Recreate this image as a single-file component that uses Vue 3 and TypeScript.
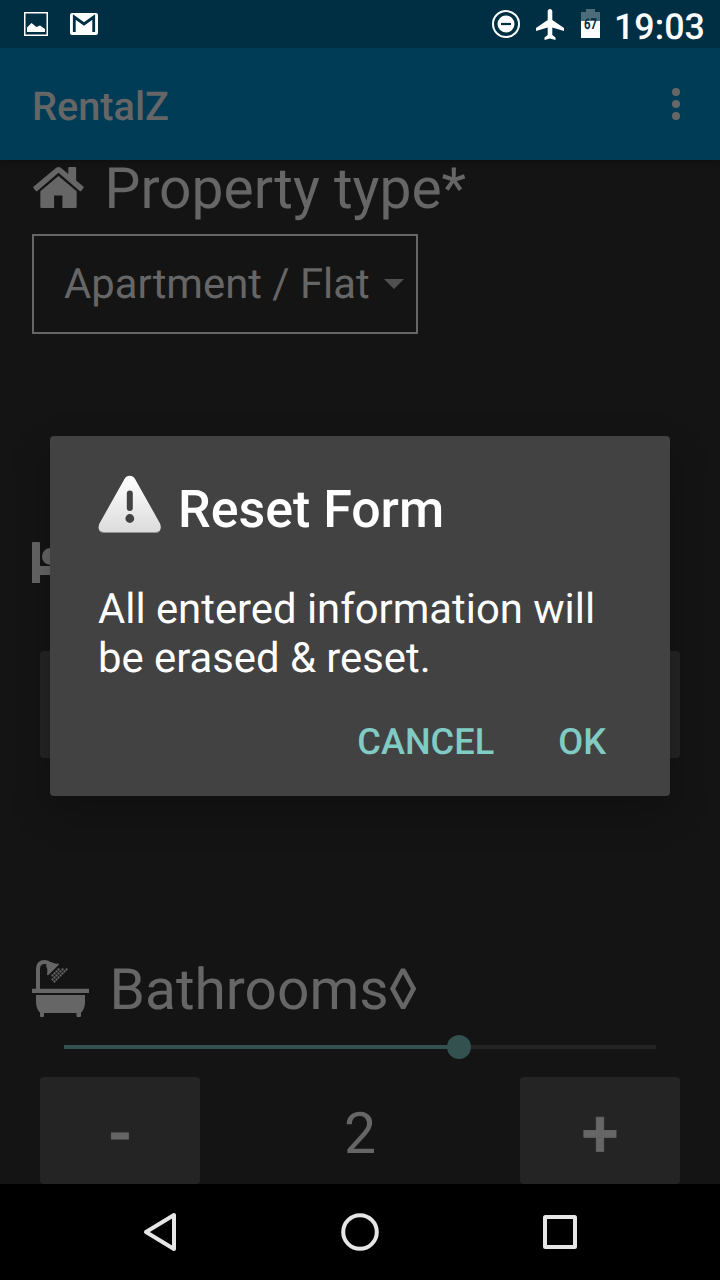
<script setup lang="ts">
import { ref } from 'vue'

const propertyType = ref<string>('Apartment / Flat')
const bathrooms = ref<number>(2)
const maxBathrooms = 3
const showers: number[][] = [
  [28, 11], [32, 11], [36, 11], [26, 13], [30, 13], [34, 13],
  [24, 15], [28, 15], [32, 15], [22, 17], [26, 17], [30, 17],
  [24, 19], [28, 19], [22, 21], [26, 21], [24, 23]
].map(([x, y]) => [x - 1.5, y - 1.5])
</script>

<template>
  <div class="screen">
    <header class="status">
      <svg class="s-picture" width="24" height="24" viewBox="0 0 24 24">
        <rect x=".75" y=".75" width="22.5" height="22.5" fill="none" stroke="#fff" stroke-width="1.5" />
        <path d="M3 20V15.500L7.500 11L12.500 15L16 13.500L21 17V20Z" fill="#fff" />
      </svg>
      <svg class="s-mail" width="28" height="24" viewBox="0 0 28 24">
        <rect y="1" width="28" height="22" rx="2" fill="#fff" />
        <path d="M4.300 20V5L14 12L23.700 5V20" fill="none" stroke="#002f43" stroke-width="2.800" />
      </svg>
      <span class="grow"></span>
      <svg class="s-dnd" width="28" height="28" viewBox="0 0 28 28">
        <circle cx="14" cy="14" r="13" fill="none" stroke="#fff" stroke-width="2" />
        <circle cx="14" cy="14" r="8.500" fill="#fff" />
        <path d="M9 14H19" stroke="#002f43" stroke-width="2.200" />
      </svg>
      <svg class="s-plane" width="28" height="31" viewBox="0 0 28 31">
        <path d="M14 0c1.400 0 2.300 1.200 2.300 2.500V11L28 19v3l-11.700-3.600V26l3.200 2.400V31L14 29.400 8.500 31v-2.600l3.200-2.400v-7.600L0 22v-3l11.700-8V2.500C11.700 1.200 12.600 0 14 0z" fill="#fff" />
      </svg>
      <svg class="s-battery" width="19" height="29" viewBox="0 0 19 29">
        <path d="M5 0h9v3h5v9H0V3h5z" fill="#4c6c7a" />
        <path d="M0 12h19v17H0z" fill="#fff" />
        <text x="3" y="20" textLength="13" lengthAdjust="spacingAndGlyphs" class="level">67</text>
      </svg>
      <span class="time">19:03</span>
    </header>

    <div class="appbar">
      <h1>RentalZ</h1>
      <svg width="8" height="32" viewBox="0 0 8 32" fill="#666">
        <circle cx="4" cy="4" r="4" /><circle cx="4" cy="16" r="4" /><circle cx="4" cy="28" r="4" />
      </svg>
    </div>

    <main class="form">
      <div class="heading property">
        <svg width="51" height="41" viewBox="0 0 52 41" preserveAspectRatio="none" fill="#666">
          <path d="M26 9L44.500 24.200V40q0 1-1 1H30V28.500H21.500V41H8.500q-1 0-1-1V24.200z" />
          <path d="M26 0q1.300 0 2.300.8L36 7V1q0-1 1-1h6q1 0 1 1v12.500l7.300 6q.9.700.2 1.600l-2.200 2.600q-.8.900-1.700.2L26 5.800 4.400 23.900q-.9.700-1.700-.2L.5 21.100q-.7-.9.200-1.600L23.700.8Q24.700 0 26 0z" />
        </svg>
        <span>Property type*</span>
      </div>
      <div class="spinner">
        <span>{{ propertyType }}</span>
        <svg width="20" height="10" viewBox="0 0 20 10"><path d="M0 0H20L10 10Z" fill="#505050" /></svg>
      </div>

      <svg class="bed" width="64" height="41" viewBox="0 0 64 41" fill="#666">
        <path d="M1 0h6q1 0 1 1v23h55q1 0 1 1v16h-8v-8H8v8H0V1q0-1 1-1z" />
        <circle cx="18.500" cy="14.500" r="8.500" /><path d="M29 7h25q10 0 10 10v5H29z" />
      </svg>
      <div class="stepper upper"><span class="btn"></span><span class="btn"></span></div>

      <div class="heading baths">
        <svg width="57" height="58" viewBox="0 0 57 58" fill="#666">
          <path d="M6 30V9Q6 2 13 2Q16 2 17.500 4" fill="none" stroke="#666" stroke-width="4" />
          <path d="M15 3q3-2 6-.2Q24 4 26.500 3.500q.8.500 0 1.500L16.500 15q-1.500.6-1.500-1Q16 9 14 6z" />
          <circle v-for="(dot, i) in showers" :key="i" :cx="dot[0]" :cy="dot[1]" r="1.150" />
          <path d="M0 28.700h57v4.300H0zM4 35h49v7q0 7-4 10.500V56q0 1-1 1h-2.500q-1 0-1-1v-3H12v3q0 1-1 1H9q-1 0-1-1v-3.500Q4 49 4 42z" />
        </svg>
        <span>Bathrooms◊</span>
      </div>
      <div class="slider">
        <div class="fill" :style="{ width: (bathrooms / maxBathrooms) * 100 + '%' }"></div>
        <div class="thumb"></div>
      </div>
      <div class="stepper">
        <span class="btn">-</span><span class="count">{{ bathrooms }}</span><span class="btn">+</span>
      </div>
    </main>

    <nav class="navbar">
      <svg width="40" height="40" viewBox="0 0 40 40"><path d="M34 3V37L6 20Z" /></svg>
      <svg width="40" height="40" viewBox="0 0 40 40"><circle cx="20" cy="20" r="16.800" /></svg>
      <svg width="40" height="40" viewBox="0 0 40 40"><rect x="5" y="5" width="30" height="30" rx=".5" /></svg>
    </nav>

    <section class="dialog" role="dialog">
      <div class="title">
        <svg width="64" height="60" viewBox="0 0 64 60">
          <defs>
            <linearGradient id="warn" x1="0" y1="0" x2="0" y2="1">
              <stop offset="0" stop-color="#fff" /><stop offset="1" stop-color="#dcdcdc" />
            </linearGradient>
          </defs>
          <path d="M26.500 4.500Q28.500 1.200 31.700 1.200T37 4.500L62 49Q64.500 57.500 57.500 58H6Q-1 57.500 1.200 50z" fill="#929292" />
          <path d="M26.500 4Q28.500.7 31.700.7T37 4L62 48.500Q64.500 56.500 57.500 57H6Q-1 56.500 1.200 49z" fill="url(#warn)" />
          <rect x="28.800" y="15.500" width="6" height="20.500" rx="3" fill="#424242" />
          <circle cx="31.800" cy="43.500" r="4.400" fill="#424242" />
        </svg>
        <h2>Reset Form</h2>
      </div>
      <p>All entered information will be erased &amp; reset.</p>
      <div class="actions"><span>CANCEL</span><span>OK</span></div>
    </section>
  </div>
</template>

<style>
body { margin: 0; background: #000; }
</style>

<style scoped>
.screen {
  position: relative;
  width: 720px;
  height: 1280px;
  overflow: hidden;
  display: flex;
  flex-direction: column;
  background: #141414;
  color: #666;
  font-family: Roboto, "Noto Sans", sans-serif;
  text-rendering: geometricPrecision;
}
svg { display: block; flex: none; }
h1, h2, p { margin: 0; }
.status {
  height: 48px;
  flex: none;
  box-sizing: border-box;
  display: flex;
  align-items: flex-start;
  padding: 0 16px 0 24px;
  background: #002f43;
  color: #fff;
}
.s-picture { margin-top: 12px; }
.s-mail { margin: 12px 0 0 22px; }
.grow { flex: 1; }
.s-dnd { margin: 10px 16px 0 0; }
.s-plane { margin: 9px 17px 0 0; }
.s-battery { margin: 9px 14px 0 0; }
.level { font: 700 15px Roboto, sans-serif; fill: #002f43; }
.time { width: 90px; font-size: 35.8px; font-weight: 500; line-height: 43px; margin-top: 6px; white-space: nowrap; }
.appbar {
  height: 112px;
  flex: none;
  box-sizing: border-box;
  display: flex;
  align-items: center;
  justify-content: space-between;
  padding: 0 40px 0 32px;
  background: #003c56;
  box-shadow: 0 1px 6px rgba(0, 0, 0, .35);
  clip-path: inset(0 0 -12px 0);
  z-index: 1;
}
.appbar h1 { font-size: 39.7px; line-height: 46px; font-weight: 500; padding-top: 5px; }
.form { height: 1024px; flex: none; }
.heading { display: flex; height: 67px; font-size: 56.9px; line-height: 67px; white-space: nowrap; }
.property { height: 62px; margin: 0 0 0 33px; line-height: 57px; }
.property svg { margin: 7px 20.5px 0 0; }
.spinner {
  box-sizing: border-box;
  width: 386px;
  height: 100px;
  margin: 12px 0 0 32px;
  padding: 0 12px 0 30px;
  border: 2px solid #666;
  display: flex;
  align-items: center;
  justify-content: space-between;
  font-size: 41.8px;
  line-height: 49px;
}
.bed { margin: 208px 0 0 32px; }
.stepper { display: flex; justify-content: space-between; height: 107px; margin: 0 40px; }
.upper { margin-top: 68px; }
.btn {
  width: 160px;
  border-radius: 4px;
  background: #242424;
  font-size: 66px;
  font-weight: 500;
  line-height: 115px;
  text-align: center;
  -webkit-text-stroke: .8px #666;
}
.count { font-size: 57.2px; line-height: 113px; }
.baths { margin: 198px 0 0 32px; }
.baths svg { margin: 4px 20.5px 0 0; }
.slider { display: flex; align-items: center; height: 4px; margin: 22px 64px 28px; background: #242424; }
.fill { height: 4px; background: #33514e; }
.thumb { width: 24px; height: 24px; margin-left: -12px; border-radius: 50%; background: #33514e; flex: none; }
.navbar {
  height: 96px;
  flex: none;
  display: flex;
  justify-content: center;
  align-items: center;
  gap: 160px;
  background: #000;
}
.navbar svg { fill: none; stroke: #e6e6e6; stroke-width: 4; stroke-linejoin: round; }
.dialog {
  position: absolute;
  left: 50px;
  top: 436px;
  width: 620px;
  height: 360px;
  box-sizing: border-box;
  padding: 39px 48px 0;
  border-radius: 4px;
  background: #424242;
  color: #fff;
  box-shadow: 0 16px 40px rgba(0, 0, 0, .24);
  z-index: 2;
}
.title { display: flex; height: 110px; }
.title h2 { font-size: 51.9px; line-height: 61px; font-weight: 500; margin: 4px 0 0 16px; }
.dialog p { font-size: 41.8px; line-height: 49px; }
.actions {
  display: flex;
  justify-content: flex-end;
  gap: 64px;
  margin: 37px 16px 0 0;
  font-size: 36.2px;
  font-weight: 500;
  line-height: 43px;
  color: #80cbc4;
}
</style>
